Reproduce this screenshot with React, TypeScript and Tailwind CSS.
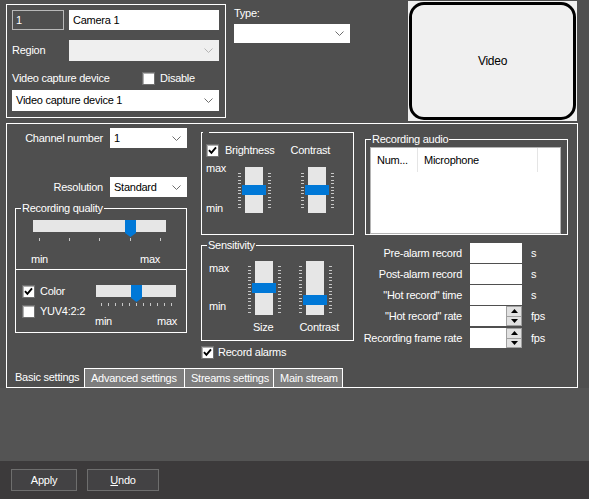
import React from "react";

function Chevron({ color = "#6e6e6e" }: { color?: string }) {
  return (
    <svg width="9" height="5" viewBox="0 0 9 5" className="shrink-0">
      <polyline points="0.5,0.5 4.5,4.5 8.5,0.5" fill="none" stroke={color} strokeWidth="1" />
    </svg>
  );
}

function Select({ className, value, chevron }: { className: string; value?: string; chevron?: string }) {
  return (
    <div className={"flex items-center justify-between text-black pl-[4px] pr-[6px] " + className}>
      <span>{value}</span>
      <Chevron color={chevron} />
    </div>
  );
}

function Checkbox({ checked }: { checked?: boolean }) {
  return (
    <span className="w-[13px] h-[13px] bg-white border border-[#707070] shadow-[inset_1px_1px_0_#b0b0b0] flex items-center justify-center shrink-0">
      {checked && (
        <svg width="9" height="9" viewBox="0 0 9 9">
          <polyline points="1,4.2 3.4,6.8 8,1.4" fill="none" stroke="#000" strokeWidth="1.9" />
        </svg>
      )}
    </span>
  );
}

function VSlider({ height, thumbY, tickStart, tickEnd, tickCount }: { height: number; thumbY: number; tickStart: number; tickEnd: number; tickCount: number }) {
  const ticks = Array.from({ length: tickCount }, (_, i) => tickStart + ((tickEnd - tickStart) * i) / (tickCount - 1));
  return (
    <svg width="40" height={height} viewBox={`0 0 40 ${height}`} className="shrink-0">
      {ticks.map((y, i) => (
        <g key={i}>
          <line x1="2" x2="5" y1={Math.round(y) + 0.5} y2={Math.round(y) + 0.5} stroke="#c8c8c8" strokeWidth="1" />
          <line x1="32" x2="35" y1={Math.round(y) + 0.5} y2={Math.round(y) + 0.5} stroke="#c8c8c8" strokeWidth="1" />
        </g>
      ))}
      <rect x="9" y="2" width="18" height={height - 4} fill="#e6e6e6" />
      <rect x="6" y={thumbY} width="24" height="10" fill="#0078d7" />
    </svg>
  );
}

function HSlider({ width, trackW, thumbX, ticks }: { width: number; trackW: number; thumbX: number; ticks: number[] }) {
  return (
    <svg width={width} height="24" viewBox={`0 0 ${width} 24`} className="shrink-0">
      <rect x="2" y="2" width={trackW} height="12" fill="#e6e6e6" />
      <polygon points={`${thumbX},2 ${thumbX + 11},2 ${thumbX + 11},15 ${thumbX + 5.5},19 ${thumbX},15`} fill="#0078d7" />
      {ticks.map((x, i) => (
        <line key={i} x1={x + 0.5} x2={x + 0.5} y1="20" y2="23" stroke="#c8c8c8" strokeWidth="1" />
      ))}
    </svg>
  );
}

function Spinner() {
  return (
    <div className="w-[16px] h-full flex flex-col border border-[#a0a0a0]">
      <div className="flex-1 bg-[#e1e1e1] border-b border-[#a0a0a0] flex items-center justify-center">
        <svg width="7" height="4" viewBox="0 0 7 4">
          <polygon points="0,4 3.5,0 7,4" fill="#000" />
        </svg>
      </div>
      <div className="flex-1 bg-[#e1e1e1] flex items-center justify-center">
        <svg width="7" height="4" viewBox="0 0 7 4">
          <polygon points="0,0 7,0 3.5,4" fill="#000" />
        </svg>
      </div>
    </div>
  );
}

function Field({ label, unit, spin, className }: { label: string; unit: string; spin?: boolean; className: string }) {
  return (
    <div className={"flex items-center h-[20px] " + className}>
      <div className="w-[103px] text-right whitespace-nowrap">{label}</div>
      <div className="ml-[8px] w-[52px] h-[20px] bg-white flex justify-end">{spin && <Spinner />}</div>
      <div className="ml-[9px]">{unit}</div>
    </div>
  );
}

export default function App() {
  return (
    <div className="w-[589px] h-[499px] bg-[#4f4f4f] flex flex-col text-[11px] leading-[13px] tracking-[-0.25px] text-white font-['Liberation_Sans',Arial,sans-serif] overflow-hidden">
      {/* top section */}
      <div className="h-[123px] flex shrink-0">
        <div className="ml-[6px] mt-[4px] w-[220px] h-[114px] border border-white px-[5px] pt-[5px] flex flex-col">
          <div className="flex h-[20px]">
            <div className="w-[52px] h-[20px] border border-[#b8b8b8] flex items-center pl-[3px]">1</div>
            <div className="ml-[5px] w-[150px] h-[20px] bg-white text-black flex items-center pl-[4px]">Camera 1</div>
          </div>
          <div className="flex h-[21px] mt-[10px] items-center">
            <div className="w-[57px]">Region</div>
            <Select className="w-[150px] h-[21px] bg-[#efefef]" chevron="#b4b4b4" />
          </div>
          <div className="flex h-[13px] mt-[11px] items-center">
            <div className="w-[130px] whitespace-nowrap">Video capture device</div>
            <Checkbox />
            <div className="ml-[5px]">Disable</div>
          </div>
          <Select className="mt-[5px] w-[207px] h-[21px] bg-white" value="Video capture device 1" />
        </div>

        <div className="ml-[8px] w-[116px] flex flex-col">
          <div className="mt-[7px] h-[13px]">Type:</div>
          <Select className="mt-[4px] w-[116px] h-[19px] bg-white" />
        </div>

        <div className="ml-[58px] mt-[1px] w-[169px] h-[120px] bg-[#f0f0f0] p-[1px]">
          <div className="w-full h-full border-[3px] border-black rounded-[15px] flex items-center justify-center text-black text-[12px]">
            Video
          </div>
        </div>
      </div>

      {/* tab page */}
      <div className="ml-[6px] w-[572px] h-[265px] border border-white flex flex-col shrink-0">
        <div className="h-[244px] flex">
          {/* column 1 */}
          <div className="w-[188px] flex flex-col">
            <div className="mt-[4px] h-[20px] flex items-center">
              <div className="w-[96px] text-right">Channel number</div>
              <Select className="ml-[7px] w-[77px] h-[20px] bg-white pr-[4px]" value="1" />
            </div>
            <div className="mt-[29px] h-[20px] flex items-center">
              <div className="w-[96px] text-right">Resolution</div>
              <Select className="ml-[7px] w-[77px] h-[20px] bg-white pr-[4px]" value="Standard" />
            </div>
            <fieldset className="mt-[5px] ml-[8px] w-[172px] h-[131px] border border-white">
              <legend className="ml-[5px] px-[1px] leading-[13px]">Recording quality</legend>
              <div className="h-[54px] flex flex-col pl-[15px]">
                <div className="mt-[3px]">
                  <HSlider width={140} trackW={133} thumbX={94} ticks={[8, 38, 68, 99, 129]} />
                </div>
                <div className="mt-[11px] h-[13px] flex">
                  <span>min</span>
                  <span className="ml-[92px]">max</span>
                </div>
              </div>
              <div className="h-[63px] border-t border-white flex">
                <div className="w-[78px] pl-[6px] pt-[15px] flex flex-col gap-[7px]">
                  <div className="h-[13px] flex items-center">
                    <Checkbox checked />
                    <span className="ml-[5px]">Color</span>
                  </div>
                  <div className="h-[13px] flex items-center">
                    <Checkbox />
                    <span className="ml-[5px]">YUV4:2:2</span>
                  </div>
                </div>
                <div className="flex flex-col">
                  <div className="mt-[13px]">
                    <HSlider width={86} trackW={80} thumbX={37} ticks={[7, 14, 21, 28, 35, 42, 49, 56, 63, 70, 77]} />
                  </div>
                  <div className="mt-[8px] h-[13px] flex pl-[1px]">
                    <span>min</span>
                    <span className="ml-[45px]">max</span>
                  </div>
                </div>
              </div>
            </fieldset>
          </div>

          {/* column 2 */}
          <div className="ml-[6px] w-[153px] flex flex-col">
            <fieldset className="mt-[2px] w-[153px] h-[109px] border border-white">
              <legend className="ml-[1px] w-[6px] h-[13px]"></legend>
              <div className="mt-[5px] pl-[4px] h-[13px] flex items-center">
                <Checkbox checked />
                <span className="ml-[6px]">Brightness</span>
                <span className="ml-[16px]">Contrast</span>
              </div>
              <div className="mt-[5px] pl-[4px] flex">
                <div className="w-[30px] h-[53px] flex flex-col">
                  <span>max</span>
                  <span className="mt-[27px]">min</span>
                </div>
                <div className="mt-[3px]">
                  <VSlider height={50} thumbY={20} tickStart={8} tickEnd={42} tickCount={11} />
                </div>
                <div className="mt-[3px] ml-[23px]">
                  <VSlider height={50} thumbY={20} tickStart={8} tickEnd={42} tickCount={11} />
                </div>
              </div>
            </fieldset>
            <fieldset className="mt-[4px] w-[153px] h-[102px] border border-white">
              <legend className="ml-[5px] px-[1px] leading-[13px]">Sensitivity</legend>
              <div className="mt-[7px] pl-[7px] flex">
                <div className="w-[37px] pt-[3px] flex flex-col">
                  <span>max</span>
                  <span className="mt-[25px]">min</span>
                </div>
                <VSlider height={58} thumbY={24} tickStart={7} tickEnd={53} tickCount={14} />
                <div className="ml-[11px]">
                  <VSlider height={58} thumbY={36} tickStart={7} tickEnd={53} tickCount={14} />
                </div>
              </div>
              <div className="mt-[4px] h-[13px] flex pl-[51px]">
                <span>Size</span>
                <span className="ml-[26px]">Contrast</span>
              </div>
            </fieldset>
            <div className="mt-[5px] h-[13px] flex items-center">
              <Checkbox checked />
              <span className="ml-[4px]">Record alarms</span>
            </div>
          </div>

          {/* column 3 */}
          <div className="ml-[5px] flex-1 flex flex-col">
            <fieldset className="mt-[9px] ml-[6px] w-[203px] h-[102px] border border-white">
              <legend className="ml-[5px] px-[1px] leading-[13px]">Recording audio</legend>
              <div className="mt-[1px] ml-[4px] w-[191px] h-[87px] bg-white border border-[#b4b4b4] text-black">
                <div className="h-[24px] flex">
                  <div className="w-[47px] pl-[6px] flex items-center border-r border-[#e5e5e5]">Num...</div>
                  <div className="w-[120px] pl-[6px] flex items-center border-r border-[#e5e5e5]">Microphone</div>
                </div>
              </div>
            </fieldset>
            <div className="mt-[8px] flex flex-col">
              <Field label="Pre-alarm record" unit="s" className="" />
              <Field label="Post-alarm record" unit="s" className="mt-[1px]" />
              <Field label={"\"Hot record\" time"} unit="s" className="mt-[1px]" />
              <Field label={"\"Hot record\" rate"} unit="fps" spin className="mt-[1px]" />
              <Field label="Recording frame rate" unit="fps" spin className="mt-[2px]" />
            </div>
          </div>
        </div>

        {/* tabs */}
        <div className="h-[19px] flex">
          <div className="w-[77px] pl-[8px] flex items-center whitespace-nowrap">Basic settings</div>
          <div className="w-[100px] pl-[6px] pt-[1px] flex items-center bg-[#7d7d7d] border-t border-l border-white whitespace-nowrap">Advanced settings</div>
          <div className="w-[89px] pl-[6px] pt-[1px] flex items-center bg-[#7d7d7d] border-t border-l border-white whitespace-nowrap">Streams settings</div>
          <div className="w-[70px] pl-[6px] pt-[1px] flex items-center bg-[#7d7d7d] border-t border-l border-r border-white whitespace-nowrap">Main stream</div>
        </div>
      </div>

      <div className="flex-1 bg-[#545454]"></div>

      {/* bottom bar */}
      <div className="h-[38px] shrink-0 bg-[#3c3a3b] flex pl-[11px] pt-[8px]">
        <div className="w-[66px] h-[22px] bg-[#434244] border border-[#6e6e6e] flex items-center justify-center">Apply</div>
        <div className="ml-[10px] w-[72px] h-[22px] bg-[#434244] border border-[#6e6e6e] flex items-center justify-center">
          <span className="underline">U</span>ndo
        </div>
      </div>
    </div>
  );
}
